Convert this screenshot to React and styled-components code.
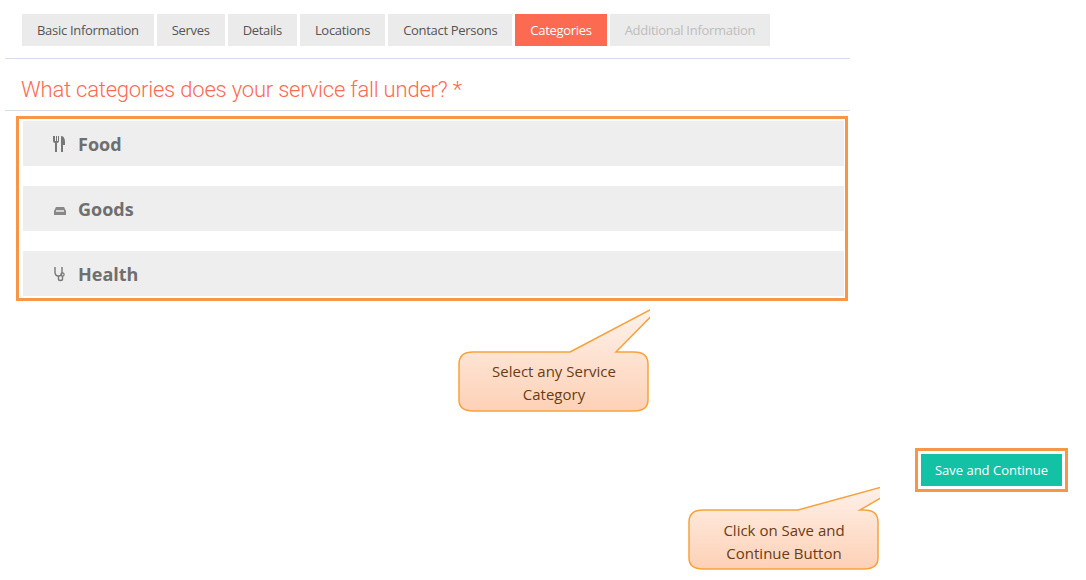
import React from 'react';
import styled, { createGlobalStyle } from 'styled-components';

const Global = createGlobalStyle`
  html, body { margin: 0; background: #fff; }
  body { font-family: 'Open Sans', 'Liberation Sans', sans-serif; }
`;

const Page = styled.div`
  position: relative;
  width: 1086px;
  height: 580px;
  overflow: hidden;
`;

const Main = styled.div`
  width: 845px;
  padding: 14px 0 0 5px;
`;

const Tabs = styled.div`
  display: flex;
  gap: 3px;
  padding: 0 0 12px 17px;
  border-bottom: 1px solid #d5dde6;
`;

const Tab = styled.div`
  height: 32px;
  padding: 0 ${(p) => p.$pad}px;
  display: flex;
  align-items: center;
  font-size: 13px;
  letter-spacing: -0.3px;
  background: ${(p) => (p.$active ? '#fd6a52' : '#ebebeb')};
  color: ${(p) => (p.$active ? '#fff' : p.$disabled ? '#bdbdbd' : '#555')};
`;

const Heading = styled.h2`
  margin: 0;
  padding: 18px 0 8px 16px;
  font-family: Roboto, 'Liberation Sans', sans-serif;
  font-weight: 300;
  font-size: 22px;
  letter-spacing: -0.2px;
  color: #fd6a52;
  border-bottom: 1px solid #d5dde6;
`;

const Frame = styled.div`
  margin: 5px 0 0 11px;
  width: 821px;
  border: 3px solid #f79646;
  padding: 2px 1px 2px 4px;
  display: flex;
  flex-direction: column;
  gap: 20px;
`;

const Row = styled.div`
  height: 45px;
  background: #eeeeee;
  display: flex;
  align-items: center;
  gap: 10px;
  padding-left: 29px;
  font-family: 'Open Sans', sans-serif;
  font-weight: 700;
  font-size: 18px;
  color: #6f6f6f;
`;

const Icon = styled.svg`
  width: 16px;
  height: 18px;
  flex: none;
`;

const ButtonFrame = styled.div`
  position: absolute;
  left: 915px;
  top: 448px;
  border: 3px solid #f79646;
  padding: 3px;
`;

const SaveButton = styled.button`
  width: 141px;
  height: 32px;
  border: none;
  background: #13c2a5;
  color: #fff;
  font-family: 'Open Sans', sans-serif;
  font-size: 13px;
`;

const Callout = styled.div`
  position: absolute;
  left: ${(p) => p.$x}px;
  top: ${(p) => p.$y}px;
  width: ${(p) => p.$w}px;
  height: ${(p) => p.$h}px;
`;

const CalloutText = styled.div`
  position: absolute;
  left: 0;
  right: 0;
  bottom: 0;
  height: 60px;
  display: flex;
  align-items: center;
  justify-content: center;
  text-align: center;
  font-family: 'Open Sans', sans-serif;
  font-size: 15px;
  line-height: 23px;
  color: #6b3b13;
`;

const Bubble = ({ x, y, w, h, d, children, id }) => (
  <Callout $x={x} $y={y} $w={w} $h={h}>
    <svg width={w} height={h} style={{ position: 'absolute', left: 0, top: 0 }}>
      <defs>
        <linearGradient id={id} x1="0" y1="0" x2="0" y2="1">
          <stop offset="0" stopColor="#fff4ee" />
          <stop offset="1" stopColor="#fdd1b6" />
        </linearGradient>
      </defs>
      <path d={d} fill={`url(#${id})`} stroke="#f7a23b" strokeWidth="1.5" />
    </svg>
    <CalloutText>{children}</CalloutText>
  </Callout>
);

const FoodIcon = () => (
  <Icon viewBox="0 0 16 18">
    <path d="M1 1v5c0 1 1 2 2 2v9h2V8c1 0 2-1 2-2V1H6v5H5V1H4v5H3V1z" fill="#777" />
    <path d="M9 1c3 0 4 3 4 6v3h-2v7h-2z" fill="#777" />
  </Icon>
);

const GoodsIcon = () => (
  <Icon viewBox="0 0 16 18">
    <path d="M4 7h8l2 4v4H2v-4z" fill="#888" />
    <path d="M4 11h8" stroke="#eee" strokeWidth="1.5" />
  </Icon>
);

const HealthIcon = () => (
  <Icon viewBox="0 0 16 18">
    <path d="M3 2v5c0 3 2 4 3.5 4S10 10 10 7V2M6.5 11v3c0 2 4 2 4 0v-3" fill="none" stroke="#777" strokeWidth="1.4" />
    <circle cx="10.5" cy="9.5" r="1.6" fill="none" stroke="#777" strokeWidth="1.2" />
  </Icon>
);

const tabs = [
  ['Basic Information', 15],
  ['Serves', 15],
  ['Details', 15],
  ['Locations', 15],
  ['Contact Persons', 15],
  ['Categories', 15, true],
  ['Additional Information', 15, false, true],
];

export default function App() {
  return (
    <Page>
      <Global />
      <Main>
        <Tabs>
          {tabs.map(([t, pad, a, d]) => (
            <Tab key={t} $pad={pad} $active={a} $disabled={d}>{t}</Tab>
          ))}
        </Tabs>
        <Heading>What categories does your service fall under? *</Heading>
        <Frame>
          <Row><FoodIcon />Food</Row>
          <Row><GoodsIcon />Goods</Row>
          <Row><HealthIcon />Health</Row>
        </Frame>
      </Main>

      <Bubble
        id="g1"
        x={458}
        y={302}
        w={192}
        h={111}
        d="M112 50 L207 0 L158 50 L176 50 Q190 50 190 62 L190 98 Q190 109 176 109 L15 109 Q1 109 1 98 L1 62 Q1 50 15 50 Z"
      >
        Select any Service<br />Category
      </Bubble>

      <ButtonFrame>
        <SaveButton>Save and Continue</SaveButton>
      </ButtonFrame>

      <Bubble
        id="g2"
        x={688}
        y={478}
        w={192}
        h={94}
        d="M110 32 L227 0 L172 32 L176 32 Q190 32 190 44 L190 80 Q190 91 176 91 L15 91 Q1 91 1 80 L1 44 Q1 32 15 32 Z"
      >
        Click on Save and<br />Continue Button
      </Bubble>
    </Page>
  );
}
